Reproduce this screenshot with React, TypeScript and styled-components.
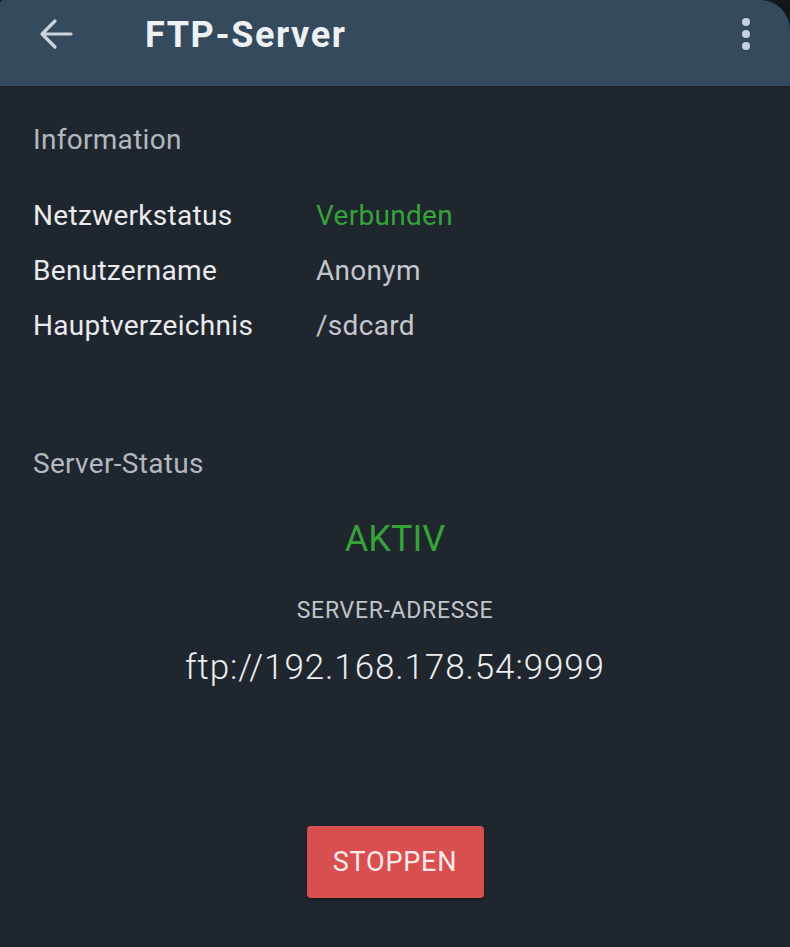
import React from 'react';
import styled, { createGlobalStyle } from 'styled-components';

const GlobalStyle = createGlobalStyle`
  html, body {
    margin: 0;
    padding: 0;
    background: #12171c;
  }
  body {
    font-family: Roboto, "Noto Sans", "Liberation Sans", sans-serif;
  }
`;

const Screen = styled.div`
  width: 790px;
  height: 947px;
  background: #20262e;
  border-radius: 4px 30px 0 0;
  overflow: hidden;
  display: flex;
  flex-direction: column;
`;

const TopBar = styled.header`
  height: 88px;
  flex-shrink: 0;
  background: #354a5d;
  display: flex;
  align-items: center;
  padding: 0 26px 0 38px;
  box-sizing: border-box;
  border-bottom: 2px solid #1b2128;
`;

const IconButton = styled.button`
  width: 36px;
  height: 36px;
  padding: 0;
  border: 0;
  background: none;
  display: flex;
  align-items: center;
  justify-content: center;
  margin-top: -18px;
`;

const Title = styled.h1`
  flex: 1;
  margin: -16px 0 0 71px;
  font-size: 36px;
  font-weight: 700;
  color: #eef1f4;
  letter-spacing: 1.6px;
`;

const Content = styled.main`
  padding: 34px 33px 0;
  display: flex;
  flex-direction: column;
`;

const SectionLabel = styled.div<{ $gap?: number }>`
  font-size: 28px;
  line-height: 36px;
  letter-spacing: 0.3px;
  color: #b2b8bf;
  margin-top: ${p => p.$gap ?? 0}px;
`;

const InfoTable = styled.div`
  margin-top: 30px;
  display: grid;
  grid-template-columns: 283px 1fr;
  grid-auto-rows: 55px;
  align-items: center;
`;

const Key = styled.div`
  font-size: 28px;
  letter-spacing: 0.3px;
  color: #e8eaed;
`;

const Value = styled.div<{ $ok?: boolean }>`
  font-size: 28px;
  letter-spacing: 0.3px;
  color: ${p => (p.$ok ? '#36a23a' : '#c3c7cc')};
`;

const StatusBlock = styled.div`
  display: flex;
  flex-direction: column;
  align-items: center;
`;

const Status = styled.div`
  margin-top: 34px;
  font-size: 36px;
  line-height: 46px;
  color: #36a23a;
`;

const AddressLabel = styled.div`
  margin-top: 34px;
  font-size: 23px;
  line-height: 30px;
  letter-spacing: 0.7px;
  color: #c0c5cb;
`;

const Address = styled.div`
  margin-top: 20px;
  font-size: 35px;
  font-weight: 300;
  line-height: 44px;
  letter-spacing: 0.9px;
  color: #eceef0;
`;

const StopButton = styled.button`
  margin-top: 136px;
  width: 177px;
  height: 72px;
  border: 0;
  border-radius: 4px;
  background: #d94f4f;
  color: #fbeaea;
  font-family: inherit;
  font-size: 27px;
  letter-spacing: 0.8px;
  box-shadow: 0 2px 2px rgba(0, 0, 0, 0.35);
`;

const BackIcon = () => (
  <svg width="36" height="36" viewBox="0 0 36 36" fill="none">
    <path d="M33 18H5M17 5L4 18l13 13" stroke="#cdd3da" strokeWidth="3.2" strokeLinecap="round" strokeLinejoin="round" />
  </svg>
);

const MoreIcon = () => (
  <svg width="12" height="36" viewBox="0 0 12 36">
    <circle cx="6" cy="6" r="4" fill="#c9d2dc" />
    <circle cx="6" cy="18" r="4" fill="#c9d2dc" />
    <circle cx="6" cy="30" r="4" fill="#c9d2dc" />
  </svg>
);

const info = [
  { key: 'Netzwerkstatus', value: 'Verbunden', ok: true },
  { key: 'Benutzername', value: 'Anonym' },
  { key: 'Hauptverzeichnis', value: '/sdcard' },
];

export default function App() {
  return (
    <>
      <GlobalStyle />
      <Screen>
        <TopBar>
          <IconButton aria-label="Zurück">
            <BackIcon />
          </IconButton>
          <Title>FTP-Server</Title>
          <IconButton aria-label="Menü">
            <MoreIcon />
          </IconButton>
        </TopBar>
        <Content>
          <SectionLabel>Information</SectionLabel>
          <InfoTable>
            {info.map(row => (
              <React.Fragment key={row.key}>
                <Key>{row.key}</Key>
                <Value $ok={row.ok}>{row.value}</Value>
              </React.Fragment>
            ))}
          </InfoTable>
          <SectionLabel $gap={93}>Server-Status</SectionLabel>
          <StatusBlock>
            <Status>AKTIV</Status>
            <AddressLabel>SERVER-ADRESSE</AddressLabel>
            <Address>ftp://192.168.178.54:9999</Address>
            <StopButton>STOPPEN</StopButton>
          </StatusBlock>
        </Content>
      </Screen>
    </>
  );
}
